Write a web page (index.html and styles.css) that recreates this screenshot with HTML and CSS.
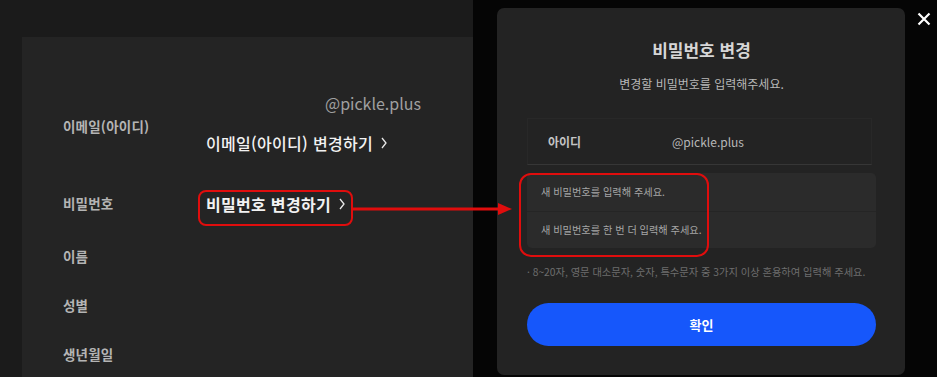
FILE: index.html
```html
<!DOCTYPE html>
<html lang="ko">
<head>
    <meta charset="UTF-8">
    <meta name="viewport" content="width=device-width, initial-scale=1.0">
    <title>비밀번호 변경</title>
    <link rel="stylesheet" href="styles.css">
</head>
<body>

    <div class="page">
        <div class="panel">
            <div class="row row-email">
                <div class="label">이메일(아이디)</div>
                <div class="value">
                    <div class="email-addr">@pickle.plus</div>
                    <a class="link link-email">이메일(아이디) 변경하기
                        <svg class="chev" viewBox="0 0 6 12"><polyline points="1,1 5,6 1,11"/></svg>
                    </a>
                </div>
            </div>
            <div class="row row-pw">
                <div class="label">비밀번호</div>
                <div class="value">
                    <a class="link link-pw">비밀번호 변경하기
                        <svg class="chev" viewBox="0 0 6 12"><polyline points="1,1 5,6 1,11"/></svg>
                    </a>
                </div>
            </div>
            <div class="row row-plain"><div class="label">이름</div></div>
            <div class="row row-plain"><div class="label">성별</div></div>
            <div class="row row-plain"><div class="label">생년월일</div></div>
        </div>
    </div>

    <div class="backdrop">
        <div class="modal">
            <h2 class="modal-title">비밀번호 변경</h2>
            <p class="modal-sub">변경할 비밀번호를 입력해주세요.</p>

            <div class="id-box">
                <span class="id-label">아이디</span>
                <span class="id-value">@pickle.plus</span>
            </div>

            <div class="inputs">
                <input type="password" placeholder="새 비밀번호를 입력해 주세요.">
                <input type="password" placeholder="새 비밀번호를 한 번 더 입력해 주세요.">
                <div class="mark"></div>
            </div>

            <p class="hint">· 8~20자, 영문 대소문자, 숫자, 특수문자 중 3가지 이상 혼용하여 입력해 주세요.</p>

            <button class="btn-ok">확인</button>
        </div>
        <button class="btn-close" aria-label="닫기">
            <svg viewBox="0 0 14 14"><path d="M1.5 1.5 L12.5 12.5 M12.5 1.5 L1.5 12.5"/></svg>
        </button>
    </div>

    <!-- flecha roja de anotación -->
    <svg class="arrow" viewBox="0 0 160 14">
        <line x1="0" y1="7" x2="148" y2="7"/>
        <polygon points="146,1 160,7 146,13"/>
    </svg>

</body>
</html>
```

FILE: styles.css
```css
* { box-sizing: border-box; }

body {
    margin: 0;
    width: 937px;
    height: 377px;
    display: flex;
    overflow: hidden;
    background: #050505;
    font-family: "Noto Sans CJK KR", "Noto Sans", sans-serif;
    position: relative;
}

/* PAGINA IZQUIERDA */
.page {
    width: 473px;
    height: 100%;
    background: #1b1b1b;
    padding: 37px 0 0 22px;
}

.panel {
    height: 100%;
    background: #242424;
    padding: 55px 0 0 41px;
}

.row {
    display: grid;
    grid-template-columns: 143px 1fr;
    align-items: start;
}

.label {
    font-size: 13.5px;
    line-height: 18px;
    font-weight: 700;
    color: #b4b4b4;
    letter-spacing: 0.2px;
}

.row-email .label { margin-top: 25px; }

.email-addr {
    padding-left: 119px;
    font-size: 16px;
    line-height: 22px;
    color: #a0a0a0;
}

.link {
    display: inline-flex;
    align-items: center;
    gap: 8px;
    font-size: 16px;
    line-height: 22px;
    font-weight: 700;
    color: #f2f2f2;
    letter-spacing: 0.3px;
}

.link-email { margin-top: 18px; font-weight: 500; }

.chev {
    width: 6px;
    height: 12px;
    fill: none;
    stroke: #e8e8e8;
    stroke-width: 1.3;
}

.row-pw { margin-top: 35px; }
.row-pw .label { margin-top: 4px; }
.row-pw .value { margin-left: -8px; }

.link-pw {
    border: 2px solid #e00d0d;
    border-radius: 8px;
    padding: 1px 6px 9px 6px;
}

.row-plain {
    height: 49px;
    align-items: center;
}
.row-pw + .row-plain { margin-top: 5px; }

/* MODAL */
.backdrop {
    flex: 1;
    display: flex;
    align-items: flex-start;
    padding: 8px 0 0 24px;
}

.modal {
    width: 408px;
    height: 367px;
    background: #232323;
    border-radius: 7px;
    padding: 30px 29px 0 30px;
    text-align: center;
}

.modal-title {
    margin: 0;
    font-size: 17px;
    line-height: 24px;
    font-weight: 700;
    color: #d6d6d6;
}

.modal-sub {
    margin: 13px 0 0;
    font-size: 12px;
    line-height: 18px;
    color: #b8b8b8;
}

.id-box {
    margin: 25px 4px 0 0;
    height: 47px;
    border: 1px solid #282828;
    border-bottom-color: #363636;
    display: flex;
    align-items: center;
    padding-left: 20px;
    text-align: left;
    font-size: 12px;
}

.id-label {
    width: 124px;
    font-weight: 700;
    color: #c4c4c4;
}

.id-value { color: #b8b8b8; }

.inputs {
    position: relative;
    margin-top: 8px;
    background: #2b2b2b;
    border-radius: 5px;
}

.inputs input {
    display: block;
    width: 100%;
    height: 37.5px;
    border: none;
    background: transparent;
    padding: 0 14px;
    font-family: inherit;
    font-size: 10.2px;
    color: #ddd;
    outline: none;
}
.inputs input + input { border-top: 1px solid #252525; }
.inputs input::placeholder { color: #a6a6a6; }

/* recuadro rojo de anotación */
.mark {
    position: absolute;
    left: -8px;
    top: 0;
    width: 190px;
    height: 84px;
    border: 2.5px solid #e00d0d;
    border-radius: 12px;
    pointer-events: none;
}

.hint {
    margin: 16px 0 0;
    text-align: left;
    font-size: 10.25px;
    line-height: 16px;
    color: #6e6e6e;
    white-space: nowrap;
}

.btn-ok {
    display: block;
    width: 100%;
    height: 43px;
    margin-top: 23px;
    border: none;
    border-radius: 22px;
    background: #1657fb;
    color: #fff;
    font-family: inherit;
    font-size: 13px;
    font-weight: 700;
    cursor: pointer;
}

.btn-close {
    margin: 4px 0 0 12px;
    width: 14px;
    height: 14px;
    padding: 0;
    border: none;
    background: none;
    cursor: pointer;
}
.btn-close svg {
    display: block;
    width: 14px;
    height: 14px;
    stroke: #fff;
    stroke-width: 2.2;
}

.arrow {
    position: absolute;
    left: 352px;
    top: 202px;
    width: 160px;
    height: 14px;
}
.arrow line { stroke: #e00d0d; stroke-width: 3; }
.arrow polygon { fill: #e00d0d; }
```
